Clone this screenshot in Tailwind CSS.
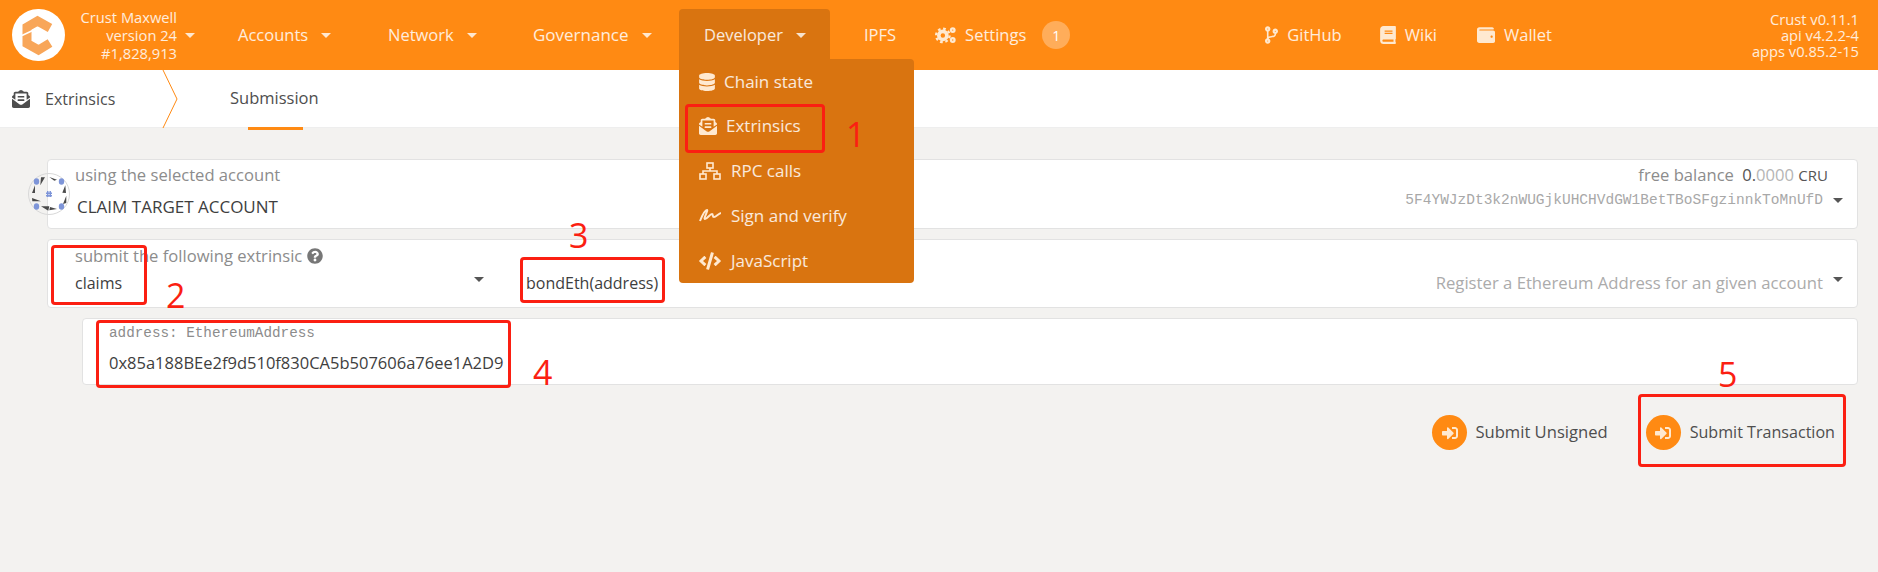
<!DOCTYPE html>
<html lang="en">
<head>
  <meta charset="UTF-8">
  <title>Crust Apps - Extrinsics</title>
  <script src="https://cdn.jsdelivr.net/npm/@tailwindcss/browser@4"></script>
</head>
<body class="relative h-[572px] overflow-hidden bg-[#f3f2f0] font-['Open_Sans','Noto_Sans',sans-serif] text-[#4e4e4e]">

  <!-- Top bar -->
  <header class="flex h-[70px] items-center bg-[#ff8a13] text-[16.5px] text-white/85">
    <div class="ml-3 h-[52px] w-[53px] rounded-full bg-white">
      <svg viewBox="0 0 53 52" class="h-[52px] w-[53px]" fill="none">
        <path d="M38 19 L25.500 12 L15 18 V34.500 L26.500 41 L38 34" stroke="#f8a659" stroke-width="9"/>
        <path d="M10 26.500 L26 19" stroke="#fff" stroke-width="1.500"/>
      </svg>
    </div>
    <div class="w-[112px] text-right text-[14.7px] leading-[18px]">
      <div>Crust Maxwell</div>
      <div>version 24</div>
      <div>#1,828,913</div>
    </div>
    <span class="ml-2 h-0 w-0 border-x-[5px] border-t-[5px] border-x-transparent border-t-white/80"></span>

    <div class="ml-[43px] flex w-[150px] items-center gap-[13px]">Accounts <span class="h-0 w-0 border-x-[5px] border-t-[5px] border-x-transparent border-t-white/80"></span></div>
    <div class="flex w-[145px] items-center gap-[13px]">Network <span class="h-0 w-0 border-x-[5px] border-t-[5px] border-x-transparent border-t-white/80"></span></div>
    <div class="flex w-[146px] items-center gap-[13px] text-[17px]">Governance <span class="h-0 w-0 border-x-[5px] border-t-[5px] border-x-transparent border-t-white/80"></span></div>

    <div class="relative flex h-[61px] w-[151px] items-center gap-[13px] self-end rounded-t bg-[#d97410] pb-[9px] pl-[25px]">
      Developer <span class="h-0 w-0 border-x-[5px] border-t-[5px] border-x-transparent border-t-white/80"></span>
      <!-- Developer menu -->
      <div class="absolute left-0 top-[50px] z-10 flex h-[224px] w-[235px] flex-col rounded-b rounded-tr bg-[#d97410] pl-5 text-[17px]">
        <div class="flex h-[45px] items-center gap-[9px] pt-[1px]">
          <svg viewBox="0 0 448 512" class="h-[18px] w-4 fill-[#ffe9d0]"><path d="M448 73.143v45.714C448 159.143 347.667 192 224 192S0 159.143 0 118.857V73.143C0 32.857 100.333 0 224 0s224 32.857 224 73.143zM448 176v102.857C448 319.143 347.667 352 224 352S0 319.143 0 278.857V176c48.125 33.143 136.208 48.572 224 48.572S399.874 209.143 448 176zm0 160v102.857C448 479.143 347.667 512 224 512S0 479.143 0 438.857V336c48.125 33.143 136.208 48.572 224 48.572S399.874 369.143 448 336z"/></svg>
          Chain state
        </div>
        <div class="flex h-[45px] items-center gap-[9px]">
          <svg viewBox="0 0 512 512" class="h-[18px] w-[18px] fill-[#ffe9d0]"><path d="M176 216h160c8.84 0 16-7.16 16-16v-16c0-8.84-7.16-16-16-16H176c-8.84 0-16 7.16-16 16v16c0 8.84 7.16 16 16 16zm-16 80c0 8.84 7.16 16 16 16h160c8.84 0 16-7.16 16-16v-16c0-8.84-7.16-16-16-16H176c-8.84 0-16 7.16-16 16v16zm96 121.13c-16.42 0-32.84-5.06-46.86-15.19L0 250.86V464c0 26.51 21.49 48 48 48h416c26.51 0 48-21.49 48-48V250.86L302.86 401.94c-14.02 10.12-30.44 15.19-46.86 15.19zm237.61-254.18c-8.85-6.94-17.24-13.47-29.61-22.81V96c0-26.51-21.49-48-48-48h-77.55c-3.04-2.2-5.87-4.26-9.04-6.56C312.6 29.17 279.2-.35 256 0c-23.2-.35-56.59 29.17-73.41 41.44-3.17 2.3-6 4.36-9.04 6.56H96c-26.51 0-48 21.49-48 48v44.14c-12.37 9.33-20.76 15.87-29.61 22.81A47.995 47.995 0 0 0 0 200.72v10.65l96 69.35V96h320v184.72l96-69.35v-10.65c0-14.74-6.78-28.67-18.39-37.77z"/></svg>
          Extrinsics
        </div>
        <div class="flex h-[45px] items-center gap-[10px]">
          <svg viewBox="0 0 22 18" class="h-[18px] w-[22px] fill-none stroke-[#ffe9d0] stroke-[1.6]"><rect x="8" y="1" width="6" height="5"/><rect x="1" y="12" width="6" height="5"/><rect x="15" y="12" width="6" height="5"/><path d="M11 6v3M4 12V9h14v3"/></svg>
          RPC calls
        </div>
        <div class="flex h-[45px] items-center gap-[10px]">
          <svg viewBox="0 0 22 18" class="h-[18px] w-[22px] fill-none stroke-[#ffe9d0] stroke-2"><path d="M1 14 C3 9 6 3 8 3 C9.500 3 4 12 6 12 C8 12 11 7 13 7 C14.500 7 13 10 15 10 C17 10 19 7 22 6"/></svg>
          Sign and verify
        </div>
        <div class="flex h-[45px] items-center gap-[10px]">
          <svg viewBox="0 0 640 512" class="h-[18px] w-[22px] fill-[#ffe9d0]"><path d="M278.9 511.5l-61-17.7c-6.4-1.8-10-8.5-8.2-14.9L346.2 8.7c1.8-6.4 8.5-10 14.9-8.2l61 17.7c6.4 1.8 10 8.5 8.2 14.9L293.8 503.3c-1.9 6.4-8.5 10.1-14.9 8.2zm-114-112.2l43.5-46.4c4.6-4.9 4.3-12.7-.8-17.2L117 256l90.6-79.7c5.1-4.5 5.5-12.3.8-17.2l-43.5-46.4c-4.5-4.8-12.1-5.1-17-.5L3.8 247.2c-5.1 4.7-5.1 12.8 0 17.5l144.1 135.1c4.9 4.6 12.5 4.4 17-.5zm327.2.6l144.1-135.1c5.1-4.7 5.1-12.8 0-17.5L492.1 112.1c-4.8-4.5-12.4-4.3-17 .5L431.6 159c-4.6 4.9-4.3 12.7.8 17.2L523 256l-90.6 79.7c-5.1 4.5-5.5 12.3-.8 17.2l43.5 46.4c4.5 4.9 12.1 5.1 17 .6z"/></svg>
          JavaScript
        </div>
      </div>
    </div>

    <div class="ml-[34px]">IPFS</div>
    <div class="ml-[39px] flex items-center gap-2">
      <svg viewBox="0 0 24 20" class="h-[18px] w-[22px] fill-none stroke-[#ffe9d0]">
        <circle cx="8.500" cy="10.500" r="4.500" stroke-width="4"/>
        <circle cx="8.500" cy="10.500" r="7.500" stroke-width="2.500" stroke-dasharray="3 2.900"/>
        <circle cx="19.500" cy="4.500" r="2" stroke-width="2.500"/>
        <circle cx="19.500" cy="15.500" r="2" stroke-width="2.500"/>
      </svg>
      Settings
    </div>
    <div class="ml-4 flex h-7 w-7 items-center justify-center rounded-full bg-white/30 text-[14px] text-white">1</div>

    <div class="ml-[195px] flex items-center gap-[9px]">
      <svg viewBox="0 0 384 512" class="h-[18px] w-[13px] fill-[#ffe9d0]"><path d="M384 144c0-44.2-35.8-80-80-80s-80 35.8-80 80c0 36.4 24.3 67.1 57.5 76.8-.6 16.1-4.2 28.5-11 36.9-15.4 19.2-49.3 22.4-85.2 25.7-28.2 2.6-57.4 5.4-81.3 16.9v-144c32.5-10.2 56-40.5 56-76.3 0-44.2-35.8-80-80-80S0 35.8 0 80c0 35.8 23.5 66.1 56 76.3v199.3C23.5 365.9 0 396.2 0 432c0 44.2 35.8 80 80 80s80-35.8 80-80c0-34-21.2-63.1-51.2-74.6 3.1-5.2 7.8-9.8 14.9-13.4 16.2-8.2 40.4-10.4 66.1-12.8 42.2-3.9 90-8.4 118.2-43.4 14-17.4 21.1-39.8 21.6-67.9 31.6-10.8 54.4-40.7 54.4-75.9zM80 64c8.8 0 16 7.2 16 16s-7.2 16-16 16-16-7.2-16-16 7.2-16 16-16zm0 384c-8.8 0-16-7.2-16-16s7.2-16 16-16 16 7.2 16 16-7.2 16-16 16zm224-320c8.8 0 16 7.2 16 16s-7.2 16-16 16-16-7.2-16-16 7.2-16 16-16z"/></svg>
      GitHub
    </div>
    <div class="ml-[38px] flex items-center gap-[9px]">
      <svg viewBox="0 0 448 512" class="h-[18px] w-4 fill-[#ffe9d0]"><path d="M448 360V24c0-13.3-10.7-24-24-24H96C43 0 0 43 0 96v320c0 53 43 96 96 96h328c13.3 0 24-10.7 24-24v-16c0-7.5-3.5-14.3-8.9-18.7-4.2-15.4-4.2-59.3 0-74.7 5.400-4.300 8.900-11.100 8.900-18.600zM128 134c0-3.300 2.700-6 6-6h212c3.300 0 6 2.700 6 6v20c0 3.300-2.700 6-6 6H134c-3.300 0-6-2.700-6-6v-20zm0 64c0-3.300 2.700-6 6-6h212c3.300 0 6 2.700 6 6v20c0 3.300-2.700 6-6 6H134c-3.300 0-6-2.700-6-6v-20zm253.400 250H96c-17.700 0-32-14.300-32-32 0-17.600 14.400-32 32-32h285.400c-1.900 17.100-1.900 46.900 0 64z"/></svg>
      Wiki
    </div>
    <div class="ml-[40px] flex items-center gap-[9px]">
      <svg viewBox="0 0 512 512" class="h-[18px] w-[18px] fill-[#ffe9d0]"><path d="M461.2 128H80c-8.84 0-16-7.16-16-16s7.16-16 16-16h384c8.84 0 16-7.16 16-16 0-26.51-21.49-48-48-48H64C28.65 32 0 60.65 0 96v320c0 35.35 28.65 64 64 64h397.2c28.02 0 50.8-21.53 50.8-48V176c0-26.47-22.78-48-50.8-48zM416 336c-17.67 0-32-14.33-32-32s14.33-32 32-32 32 14.33 32 32-14.33 32-32 32z"/></svg>
      Wallet
    </div>
    <div class="ml-auto mr-[19px] text-right text-[14.7px] leading-4">
      <div>Crust v0.11.1</div>
      <div>api v4.2.2-4</div>
      <div>apps v0.85.2-15</div>
    </div>
  </header>

  <!-- Sub navigation -->
  <nav class="flex h-[58px] items-center border-b border-[#eeeeee] bg-white text-[16px]">
    <svg viewBox="0 0 512 512" class="ml-3 h-[18px] w-[18px] fill-[#4e4e4e]"><path d="M176 216h160c8.84 0 16-7.16 16-16v-16c0-8.84-7.16-16-16-16H176c-8.84 0-16 7.16-16 16v16c0 8.84 7.16 16 16 16zm-16 80c0 8.84 7.16 16 16 16h160c8.84 0 16-7.16 16-16v-16c0-8.84-7.16-16-16-16H176c-8.84 0-16 7.16-16 16v16zm96 121.13c-16.42 0-32.84-5.06-46.86-15.19L0 250.86V464c0 26.51 21.49 48 48 48h416c26.51 0 48-21.49 48-48V250.86L302.86 401.94c-14.02 10.12-30.44 15.19-46.86 15.19zm237.61-254.18c-8.85-6.94-17.24-13.47-29.61-22.81V96c0-26.51-21.49-48-48-48h-77.55c-3.04-2.2-5.87-4.26-9.04-6.56C312.6 29.17 279.2-.35 256 0c-23.2-.35-56.59 29.17-73.41 41.44-3.17 2.3-6 4.36-9.04 6.56H96c-26.51 0-48 21.49-48 48v44.14c-12.37 9.33-20.76 15.87-29.61 22.81A47.995 47.995 0 0 0 0 200.72v10.65l96 69.35V96h320v184.72l96-69.35v-10.65c0-14.74-6.78-28.67-18.39-37.77z"/></svg>
    <span class="ml-[15px] w-[117px]">Extrinsics</span>
    <svg viewBox="0 0 16 58" class="h-[58px] w-4 fill-none stroke-[#ff8a13]"><path d="M1 0 L15 29 L1 58"/></svg>
    <div class="relative ml-[52px] flex h-full items-center text-[16.5px]">
      Submission
      <span class="absolute -bottom-[3px] left-[18px] h-[3px] w-[55px] bg-[#ff8a13]"></span>
    </div>
  </nav>

  <!-- Form -->
  <main class="ml-[47px] mr-5 mt-[31px] flex flex-col gap-[10px]">
    <section class="relative flex h-[70px] justify-between rounded border border-[#e2e2e2] bg-white pl-[27px] pr-[14px]">
      <svg viewBox="0 0 42 42" class="absolute -left-[20px] top-[13px] h-[42px] w-[42px]">
        <circle cx="21" cy="21" r="20.500" fill="none" stroke="#d8d8d8"/>
        <g fill="#7e95d8"><ellipse cx="8.500" cy="8.500" rx="2.700" ry="3.300"/><ellipse cx="33.500" cy="8.500" rx="2.700" ry="3.300"/><ellipse cx="8.500" cy="33.500" rx="2.700" ry="3.300"/><ellipse cx="33.500" cy="33.500" rx="2.700" ry="3.300"/><path d="M19 18h1.500v6H19zM21.500 18H23v6h-1.500zM18 19.500h6V21h-6zM18 22h6v1.500h-6z"/></g>
        <g fill="#4a4a4a"><path d="M13 4.300h4L12.300 12.300zM21.300 4L29 6.700 26.300 7.700zM37.300 12.300L38 20l-3.700-.3zM38.300 22.700V30L35 31zM20.300 37.700L13 33.300h8.300zM4 25l9 3.300H4.300zM4 20l3-7.700V20zM21.300 37.300L29 36 22 34z"/></g>
      </svg>
      <div class="flex flex-col">
        <span class="mt-[5px] text-[16.6px] leading-[20px] text-[#8c8c8c]">using the selected account</span>
        <span class="ml-[2px] mt-[11px] text-[17px] leading-[22px] text-[#3e3e3e]">CLAIM TARGET ACCOUNT</span>
      </div>
      <div class="flex flex-col items-end">
        <div class="mr-[15px] mt-[5px] text-[16.6px] leading-[20px] text-[#8c8c8c]">free balance <span class="ml-1 text-[#555]">0.</span><span class="text-[#b5b5b5]">0000</span> <span class="text-[15px] text-[#555]">CRU</span></div>
        <div class="mt-[5px] flex items-center gap-[10px] font-['Liberation_Mono',monospace] text-[14.5px] leading-[20px] text-[#a8a8a8]">
          5F4YWJzDt3k2nWUGjkUHCHVdGW1BetTBoSFgzinnkToMnUfD
          <span class="h-0 w-0 border-x-[5px] border-t-[5px] border-x-transparent border-t-[#555]"></span>
        </div>
      </div>
    </section>

    <section class="flex h-[69px] rounded border border-[#e2e2e2] bg-white pl-[27px] pr-[14px]">
      <div class="flex w-[451px] flex-col">
        <div class="mt-[6px] flex items-center gap-[5px] text-[16.6px] leading-[20px] text-[#8c8c8c]">
          submit the following extrinsic
          <svg viewBox="0 0 512 512" class="h-4 w-4 fill-[#777]"><path d="M504 256c0 136.997-111.043 248-248 248S8 392.997 8 256C8 119.083 119.043 8 256 8s248 111.083 248 248zM262.655 90c-54.497 0-89.255 22.957-116.549 63.758-3.536 5.286-2.353 12.415 2.715 16.258l34.699 26.31c5.205 3.947 12.621 3.008 16.665-2.122 17.864-22.658 30.113-35.797 57.303-35.797 20.429 0 45.698 13.148 45.698 32.958 0 14.976-12.363 22.667-32.534 33.976C247.128 238.528 216 254.941 216 296v4c0 6.627 5.373 12 12 12h56c6.627 0 12-5.373 12-12v-1.333c0-28.462 83.186-29.647 83.186-106.667 0-58.002-60.165-102-116.531-102zM256 338c-25.365 0-46 20.635-46 46 0 25.364 20.635 46 46 46s46-20.636 46-46c0-25.365-20.635-46-46-46z"/></svg>
        </div>
        <div class="mt-[6px] flex items-center justify-between text-[16px] leading-[22px] text-[#3e3e3e]">
          claims
          <span class="mb-[8px] mr-[42px] h-0 w-0 border-x-[5px] border-t-[5px] border-x-transparent border-t-[#555]"></span>
        </div>
      </div>
      <div class="mt-[32px] flex h-[22px] flex-1 items-center justify-between text-[16px] leading-[22px] text-[#3e3e3e]">
        bondEth(address)
        <div class="flex items-center gap-[10px] text-[16.7px] text-[#ababab]">
          Register a Ethereum Address for an given account
          <span class="mb-[8px] h-0 w-0 border-x-[5px] border-t-[5px] border-x-transparent border-t-[#555]"></span>
        </div>
      </div>
    </section>

    <section class="ml-[35px] flex h-[67px] flex-col rounded border border-[#e2e2e2] bg-white pl-[26px]">
      <span class="mt-[5px] font-['Liberation_Mono',monospace] text-[14.3px] leading-[18px] text-[#8c8c8c]">address: EthereumAddress</span>
      <span class="mt-[10px] text-[16.5px] leading-[22px] text-[#3e3e3e]">0x85a188BEe2f9d510f830CA5b507606a76ee1A2D9</span>
    </section>
  </main>

  <div class="mr-[43px] mt-[30px] flex justify-end gap-[38px]">
    <div class="flex items-center gap-2 text-[16.6px]">
      <span class="flex h-[35px] w-[35px] items-center justify-center rounded-full bg-[#ff8a13]">
        <svg viewBox="0 0 512 512" class="h-4 w-4 fill-[#ffe9d0]"><path d="M416 448h-84c-6.6 0-12-5.4-12-12v-40c0-6.6 5.4-12 12-12h84c17.7 0 32-14.3 32-32V160c0-17.7-14.3-32-32-32h-84c-6.6 0-12-5.4-12-12V76c0-6.6 5.4-12 12-12h84c53 0 96 43 96 96v192c0 53-43 96-96 96zm-47-201L201 79c-15-15-41-4.5-41 17v96H24c-13.3 0-24 10.7-24 24v96c0 13.3 10.7 24 24 24h136v96c0 21.5 26 32 41 17l168-168c9.3-9.4 9.3-24.6 0-34z"/></svg>
      </span>
      Submit Unsigned
    </div>
    <div class="flex items-center gap-[9px] text-[16.1px]">
      <span class="flex h-[35px] w-[35px] items-center justify-center rounded-full bg-[#ff8a13]">
        <svg viewBox="0 0 512 512" class="h-4 w-4 fill-[#ffe9d0]"><path d="M416 448h-84c-6.6 0-12-5.4-12-12v-40c0-6.6 5.4-12 12-12h84c17.7 0 32-14.3 32-32V160c0-17.7-14.3-32-32-32h-84c-6.6 0-12-5.4-12-12V76c0-6.6 5.4-12 12-12h84c53 0 96 43 96 96v192c0 53-43 96-96 96zm-47-201L201 79c-15-15-41-4.5-41 17v96H24c-13.3 0-24 10.7-24 24v96c0 13.3 10.7 24 24 24h136v96c0 21.5 26 32 41 17l168-168c9.3-9.4 9.3-24.6 0-34z"/></svg>
      </span>
      Submit Transaction
    </div>
  </div>

  <!-- Red annotations drawn over the screenshot -->
  <div class="absolute left-[685px] top-[104px] z-20 h-[49px] w-[140px] rounded border-[3px] border-[#fb1f12]"></div>
  <div class="absolute left-[51px] top-[245px] z-20 h-[60px] w-[96px] rounded border-[3px] border-[#fb1f12]"></div>
  <div class="absolute left-[520px] top-[257px] z-20 h-[46px] w-[145px] rounded border-[3px] border-[#fb1f12]"></div>
  <div class="absolute left-[96px] top-[320px] z-20 h-[68px] w-[415px] rounded border-[3px] border-[#fb1f12]"></div>
  <div class="absolute left-[1638px] top-[394px] z-20 h-[73px] w-[208px] rounded border-[3px] border-[#fb1f12]"></div>
  <span class="absolute left-[846px] top-[113px] z-20 text-[34px] leading-[42px] text-[#fb1f12]">1</span>
  <span class="absolute left-[166px] top-[274px] z-20 text-[34px] leading-[42px] text-[#fb1f12]">2</span>
  <span class="absolute left-[569px] top-[214px] z-20 text-[34px] leading-[42px] text-[#fb1f12]">3</span>
  <span class="absolute left-[533px] top-[351px] z-20 text-[34px] leading-[42px] text-[#fb1f12]">4</span>
  <span class="absolute left-[1718px] top-[353px] z-20 text-[34px] leading-[42px] text-[#fb1f12]">5</span>
</body>
</html>
